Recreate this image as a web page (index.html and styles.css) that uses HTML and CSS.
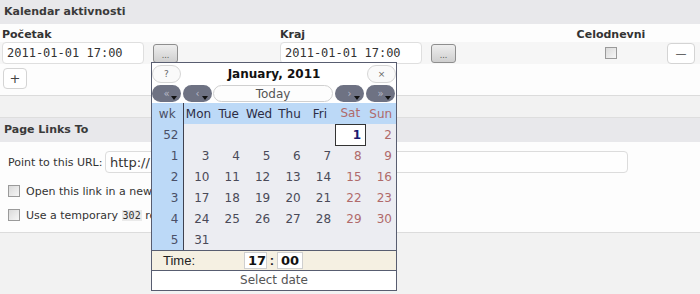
FILE: index.html
```html
<html>
    <head>
        <link rel="stylesheet" href="styles.css">
    </head>
    <body>
        <title>Kalendar aktivnosti</title>
        <div class="postbox">
            <h3 class="hndle">Kalendar aktivnosti</h3>
            <div class="inside">
                <div class="event-row labels">
                    <label for="start">Početak</label>
                    <label for="end">Kraj</label>
                    <label for="allday" class="center">Celodnevni</label>
                    <span></span>
                </div>
                <div class="event-row fields">
                    <div class="date-field">
                        <input type="text" class="date-input" id="start" value="2011-01-01 17:00">
                        <button class="pick">...</button>
                    </div>
                    <div class="date-field">
                        <input type="text" class="date-input" id="end" value="2011-01-01 17:00">
                        <button class="pick">...</button>
                    </div>
                    <div class="center"><input type="checkbox" class="check" id="allday"></div>
                    <div><button class="small-btn remove">&mdash;</button></div>
                </div>
                <button class="small-btn add">+</button>
            </div>
        </div>

        <div class="postbox second">
            <h3 class="hndle">Page Links To</h3>
            <div class="inside links">
                <div class="url-row">
                    <label for="url">Point to this URL:</label>
                    <input type="text" class="url-input" id="url" value="http://">
                </div>
                <div class="check-row">
                    <input type="checkbox" class="check" id="newtab">
                    <label for="newtab" class="check-label">Open this link in a new tab</label>
                </div>
                <div class="check-row">
                    <input type="checkbox" class="check" id="temp">
                    <label for="temp" class="check-label">Use a temporary <code>302</code> redirect</label>
                </div>
            </div>
        </div>

        <div class="calendar">
            <div class="cal-title">
                <button class="pill">?</button>
                <span class="month">January, 2011</span>
                <button class="pill">&times;</button>
            </div>
            <div class="cal-nav">
                <button class="nav-btn">&laquo;</button>
                <button class="nav-btn">&lsaquo;</button>
                <button class="today">Today</button>
                <button class="nav-btn">&rsaquo;</button>
                <button class="nav-btn">&raquo;</button>
            </div>
            <table class="cal-grid">
                <thead>
                    <tr><th class="wk">wk</th><th>Mon</th><th>Tue</th><th>Wed</th><th>Thu</th><th>Fri</th><th class="we">Sat</th><th class="we">Sun</th></tr>
                </thead>
                <tbody>
                    <tr><td class="wk">52</td><td></td><td></td><td></td><td></td><td></td><td class="sel">1</td><td class="we">2</td></tr>
                    <tr><td class="wk">1</td><td>3</td><td>4</td><td>5</td><td>6</td><td>7</td><td class="we">8</td><td class="we">9</td></tr>
                    <tr><td class="wk">2</td><td>10</td><td>11</td><td>12</td><td>13</td><td>14</td><td class="we">15</td><td class="we">16</td></tr>
                    <tr><td class="wk">3</td><td>17</td><td>18</td><td>19</td><td>20</td><td>21</td><td class="we">22</td><td class="we">23</td></tr>
                    <tr><td class="wk">4</td><td>24</td><td>25</td><td>26</td><td>27</td><td>28</td><td class="we">29</td><td class="we">30</td></tr>
                    <tr><td class="wk">5</td><td>31</td><td></td><td></td><td></td><td></td><td></td><td></td></tr>
                </tbody>
            </table>
            <div class="cal-time">
                <span class="time-label">Time:</span>
                <span class="time-box hour">17</span>
                <span class="colon">:</span>
                <span class="time-box">00</span>
            </div>
            <div class="cal-status">Select date</div>
        </div>
    </body>
</html>
```

FILE: styles.css
```css
body {
    margin: 0;
    background-color: #f2f2f2;
    font-family: "DejaVu Sans", Verdana, sans-serif;
    font-size: 11px;
    color: #333;
}
* {
    box-sizing: border-box;
}
button {
    font-family: "DejaVu Sans", Verdana, sans-serif;
    padding: 0;
    cursor: pointer;
}
.postbox {
    background-color: #fdfdfd;
    border-bottom: 1px solid #dcdcdc;
}
.postbox.second {
    margin-top: 21px;
    border-top: 1px solid #dedede;
}
.hndle {
    margin: 0;
    height: 24px;
    line-height: 24px;
    padding-left: 4px;
    font-size: 11px;
    background-color: #e8e8eb;
    color: #3a3a3a;
}
.inside {
    padding: 4px 0 6px 2px;
}
.event-row {
    display: grid;
    grid-template-columns: 278px 296px 70px 1fr;
}
.labels {
    height: 14px;
    line-height: 14px;
    font-weight: bold;
}
.fields {
    height: 22px;
    align-items: center;
    background-color: #f6f6f6;
    margin-left: -2px;
    padding-left: 2px;
}
.center {
    text-align: center;
}
.date-field {
    display: flex;
    align-items: center;
}
.date-input {
    width: 142px;
    height: 22px;
    margin: 0;
    padding: 0 4px;
    border: 1px solid #dfdfdf;
    border-radius: 4px;
    background-color: #fff;
    font-family: "DejaVu Sans Mono", monospace;
    font-size: 12px;
    color: #333;
}
.pick {
    width: 25px;
    height: 19px;
    margin-left: 9px;
    border: 1px solid #8e8e8e;
    border-radius: 3px;
    background: linear-gradient(#eeeeee, #cfcfcf);
    font-size: 8px;
    line-height: 22px;
    color: #555;
}
.check {
    width: 12px;
    height: 12px;
    margin: 0;
    vertical-align: middle;
    appearance: none;
    border: 1px solid #9a9a9a;
    background: linear-gradient(135deg, #dadada, #f6f6f6);
}
.small-btn {
    height: 21px;
    border: 1px solid #d4d4d4;
    border-radius: 4px;
    background-color: #fff;
    color: #444;
    font-size: 13px;
}
.remove {
    width: 28px;
    margin-left: 21px;
    font-size: 11px;
}
.add {
    display: block;
    width: 24px;
    margin: 4px 0 0 1px;
}
.links {
    padding: 9px 0 7px 8px;
    font-size: 11px;
}
.url-row {
    display: flex;
    align-items: center;
    height: 22px;
}
.url-row label {
    width: 97px;
}
.url-input {
    width: 523px;
    height: 22px;
    margin: 0;
    padding: 0 4px;
    border: 1px solid #dcdcdc;
    border-radius: 4px;
    background-color: #fefefe;
    font-family: "DejaVu Sans", sans-serif;
    font-size: 13px;
    color: #333;
}
.check-row {
    display: flex;
    align-items: center;
    gap: 6px;
    height: 20px;
    margin-top: 8px;
}
.check-row + .check-row {
    margin-top: 4px;
}
.check-label {
    max-width: 125px;
    overflow: hidden;
    white-space: nowrap;
}
code {
    font-family: "DejaVu Sans Mono", monospace;
    font-size: 10px;
    background-color: #eaeaea;
    padding: 0 1px;
}

/* calendar popup */
.calendar {
    position: absolute;
    left: 151px;
    top: 62px;
    width: 246px;
    border: 1px solid #585d70;
    background-color: #ecedf2;
    font-size: 12px;
    color: #444;
}
.cal-title {
    display: flex;
    align-items: center;
    justify-content: space-between;
    height: 21px;
    background-color: #fff;
}
.pill {
    width: 29px;
    height: 18px;
    border: 1px solid #d6d6d6;
    border-radius: 9px;
    background-color: #fafafa;
    color: #666;
    font-size: 9px;
}
.month {
    font-weight: bold;
    font-size: 12px;
    color: #111;
}
.cal-nav {
    display: flex;
    align-items: center;
    gap: 2px;
    height: 19px;
    background-color: #fff;
}
.nav-btn {
    position: relative;
    width: 29px;
    height: 17px;
    border: none;
    border-radius: 9px;
    background-color: #6e7283;
    color: #b8bcc8;
    font-size: 10px;
    line-height: 17px;
}
.nav-btn::after {
    content: "";
    position: absolute;
    right: 4px;
    bottom: 2px;
    border-left: 3px solid transparent;
    border-right: 3px solid transparent;
    border-top: 4px solid #111;
}
.today {
    width: 120px;
    height: 17px;
    margin-left: -1px;
    border: 1px solid #d0d0d0;
    border-radius: 9px;
    background-color: #fdfdfd;
    color: #555;
    font-size: 12px;
}
.cal-grid {
    width: 244px;
    border-collapse: collapse;
    table-layout: fixed;
    font-size: 12px;
}
.cal-grid th {
    height: 21px;
    padding: 0;
    font-weight: normal;
    background-color: #bcd9f7;
    color: #2c2c44;
    text-align: center;
}
.cal-grid td {
    height: 21px;
    padding: 0 4px 0 0;
    text-align: right;
    color: #4a4a58;
}
.cal-grid .wk {
    width: 31px;
    background-color: #bcd9f7;
    border-right: 1px solid #3e4150;
    color: #4a4f66;
}
.cal-grid th.wk {
    text-align: center;
}
.cal-grid .we {
    color: #b06a6a;
}
.cal-grid .sel {
    background-color: #fff;
    border: 1px solid #333;
    font-weight: bold;
    color: #1a1a70;
}
.cal-time {
    display: flex;
    align-items: center;
    height: 20px;
    padding-left: 11px;
    border-top: 1px solid #585d70;
    background-color: #f5f0e2;
    font-family: "Liberation Sans", Arial, sans-serif;
    font-size: 13px;
    color: #222;
}
.time-label {
    width: 81px;
}
.time-box {
    height: 17px;
    padding: 0 3px;
    border: 1px solid #cfcfcf;
    background-color: #fff;
    font-family: "DejaVu Sans", sans-serif;
    font-weight: bold;
    font-size: 13px;
    line-height: 15px;
    color: #111;
}
.hour {
    width: 23px;
}
.colon {
    width: 10px;
    text-align: center;
    font-weight: bold;
}
.cal-status {
    height: 20px;
    line-height: 19px;
    border-top: 1px solid #585d70;
    background-color: #fff;
    text-align: center;
    color: #555;
}
```
